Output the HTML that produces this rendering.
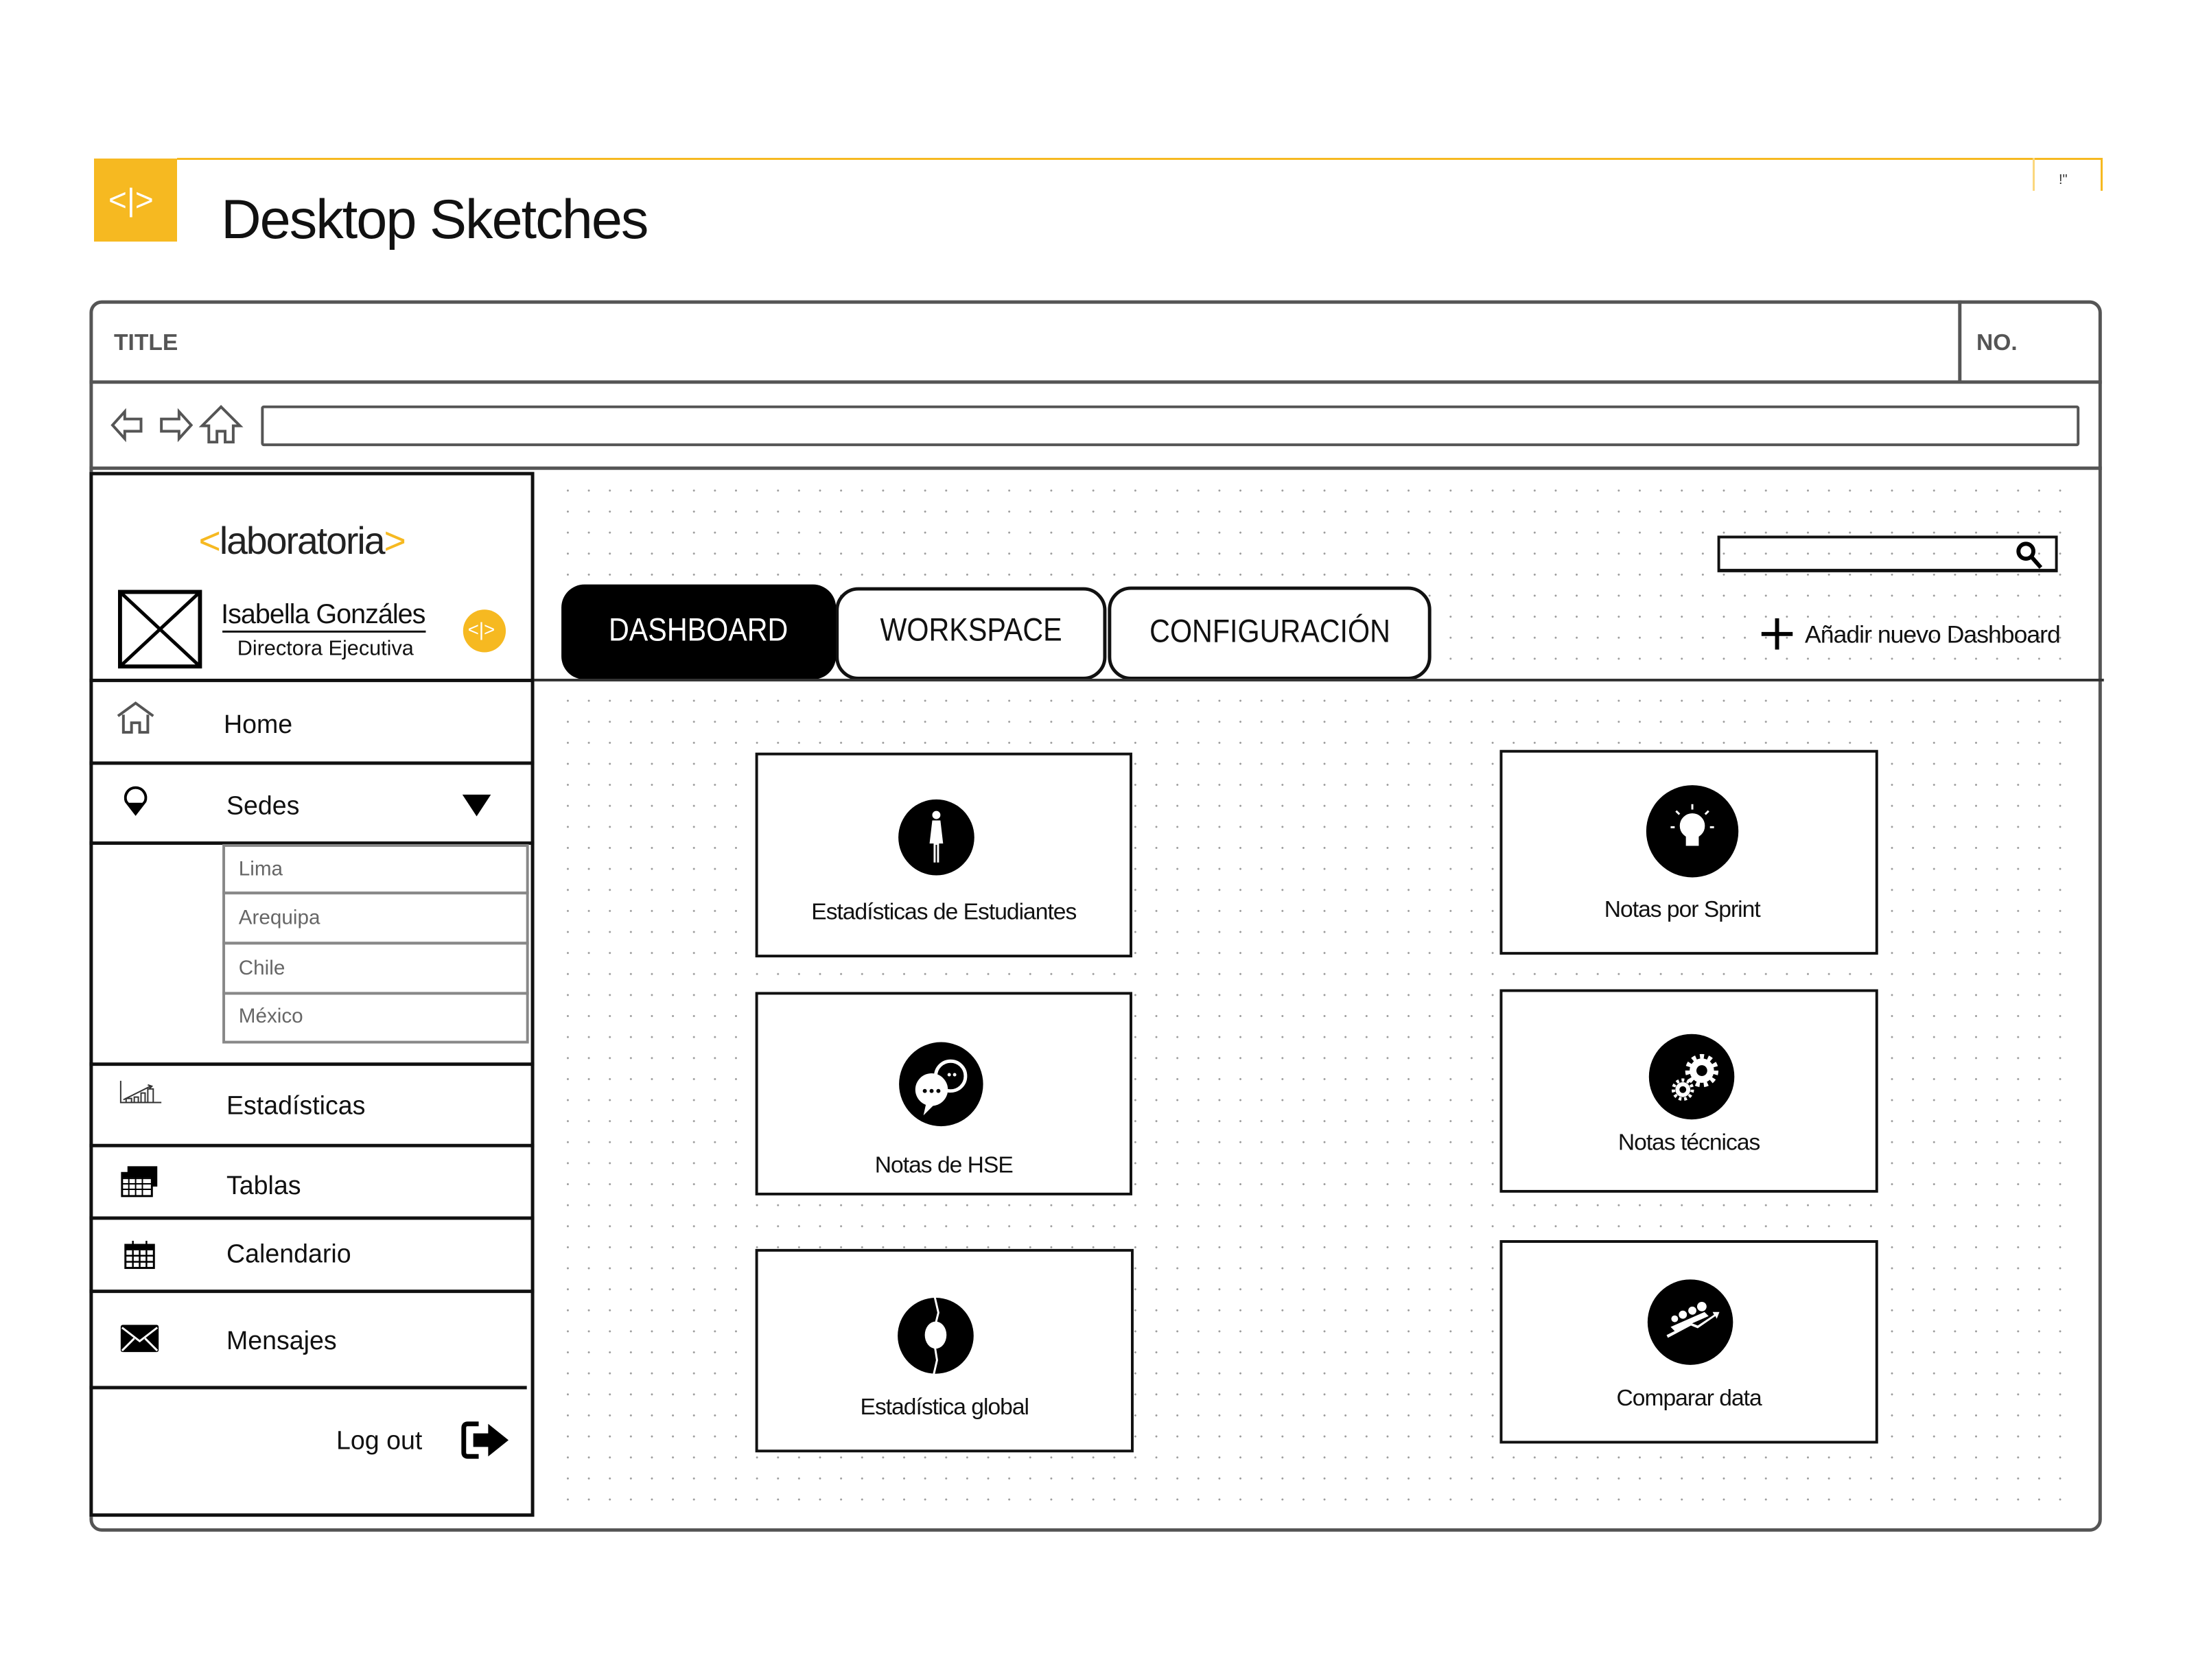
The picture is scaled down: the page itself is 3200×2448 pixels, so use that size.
<!DOCTYPE html>
<html><head><meta charset="utf-8"><style>
*{margin:0;padding:0;box-sizing:border-box}
body{width:3200px;height:2448px;background:#fff;position:relative;overflow:hidden;font-family:"Liberation Sans",sans-serif;color:#111}
#w{position:absolute;left:0;top:0;width:3200px;height:2448px;transform:scale(0.988);transform-origin:0 0}
.a{position:absolute}
.t{position:absolute;white-space:nowrap;line-height:1}
.hl{position:absolute;height:5px;background:#111}
.card{position:absolute;border:4px solid #111;background:#fff}
.ic{position:absolute;border-radius:50%;background:#000}
.lab{position:absolute;left:0;right:0;text-align:center;font-size:34px;letter-spacing:-1px}
.nav{position:absolute;font-size:38px;left:335px}
.sub{position:absolute;left:328px;width:452px;border:4px solid #888;font-size:30px;color:#666;padding-left:20px}
.dots{background-image:radial-gradient(circle,#9a9a9a 1.3px,transparent 1.6px);background-size:31px 31px}
.sx{display:inline-block;transform:scaleX(0.87)}
</style></head><body>
<!-- header (unscaled) -->
<div class="a" style="left:137px;top:231px;width:121px;height:121px;background:#f6b921"></div>
<div class="t" style="left:158px;top:268px;font-size:46px;color:#fff">&lt;|&gt;</div>
<div class="a" style="left:258px;top:230px;width:2805px;height:3px;background:#f6b921"></div>
<div class="a" style="left:2962px;top:230px;width:3px;height:48px;background:#fbd77e"></div>
<div class="a" style="left:3061px;top:230px;width:3px;height:48px;background:#f6b921"></div>
<div class="t" style="left:3000px;top:252px;font-size:20px;color:#333">!"</div>
<div id="w">
<div class="t" style="left:326px;top:283px;font-size:82px;letter-spacing:-2px">Desktop Sketches</div>

<!-- frame -->
<div class="a" style="left:132px;top:443px;width:2968px;height:1816px;border:5px solid #555;border-radius:18px"></div>
<div class="a" style="left:132px;top:561px;width:2968px;height:5px;background:#555"></div>
<div class="a" style="left:2888px;top:443px;width:5px;height:120px;background:#555"></div>
<div class="t" style="left:168px;top:488px;font-size:34px;font-weight:bold;color:#555">TITLE</div>
<div class="t" style="left:2915px;top:488px;font-size:34px;font-weight:bold;color:#555">NO.</div>
<div class="a" style="left:132px;top:688px;width:2968px;height:5px;background:#555"></div>
<div class="a" style="left:385px;top:598px;width:2682px;height:60px;border:4px solid #555;border-radius:4px"></div>
<svg class="a" style="left:160px;top:590px" width="200" height="70" viewBox="0 0 200 70" fill="none" stroke="#555" stroke-width="4">
<path d="M6 37 L24 17 V28 H48 V46 H24 V57 Z"/>
<path d="M122 37 L104 17 V28 H78 V46 H104 V57 Z"/>
<path d="M138 38 L166 10 L194 38 H184 V62 H172 V46 H160 V62 H148 V38 Z"/>
</svg>

<!-- main dotted area -->
<div class="a dots" style="left:822px;top:708px;width:2232px;height:1520px"></div>

<!-- sidebar -->
<div class="a" style="left:132px;top:696px;width:656px;height:1541px;border:5px solid #111;background:#fff"></div>
<div class="t" style="left:293px;top:770px;font-size:56px;letter-spacing:-2px;color:#222"><span style="color:#f6b921">&lt;</span>laboratoria<span style="color:#f6b921">&gt;</span></div>
<svg class="a" style="left:174px;top:870px" width="124" height="116"><rect x="3" y="3" width="118" height="110" fill="#fff" stroke="#000" stroke-width="6"/><path d="M3 3L121 113M121 3L3 113" stroke="#000" stroke-width="5"/></svg>
<div class="t" style="left:326px;top:886px;font-size:40px;letter-spacing:-1px">Isabella Gonzáles</div>
<div class="a" style="left:328px;top:930px;width:300px;height:3px;background:#111"></div>
<div class="t" style="left:350px;top:940px;font-size:31px">Directora Ejecutiva</div>
<div class="a" style="left:683px;top:899px;width:63px;height:63px;border-radius:50%;background:#f6b921"></div>
<div class="t" style="left:690px;top:915px;font-size:28px;color:#fff">&lt;|&gt;</div>

<div class="hl" style="left:132px;top:1001px;width:656px"></div>
<svg class="a" style="left:170px;top:1034px" width="60" height="50" fill="none" stroke="#555" stroke-width="4"><path d="M4 22 L30 3 L56 22 M12 20 V46 H24 V32 H36 V46 H48 V20"/></svg>
<div class="nav t" style="left:330px;top:1050px">Home</div>
<div class="hl" style="left:132px;top:1123px;width:656px"></div>
<svg class="a" style="left:180px;top:1158px" width="40" height="46"><path d="M20 42 L6 24 A15 15 0 1 1 34 24 Z" fill="#fff" stroke="#000" stroke-width="4"/><path d="M8 26 L20 42 L32 26Z" fill="#000"/></svg>
<div class="nav t" style="left:334px;top:1170px">Sedes</div>
<svg class="a" style="left:680px;top:1168px" width="46" height="40"><path d="M2 4 H44 L23 36Z" fill="#000"/></svg>
<div class="hl" style="left:132px;top:1241px;width:656px"></div>
<div class="sub" style="top:1245px;height:74px;line-height:66px">Lima</div>
<div class="sub" style="top:1315px;height:78px;line-height:70px">Arequipa</div>
<div class="sub" style="top:1389px;height:78px;line-height:70px">Chile</div>
<div class="sub" style="top:1463px;height:76px;line-height:64px">México</div>

<div class="hl" style="left:132px;top:1567px;width:656px"></div>
<svg class="a" style="left:172px;top:1592px" width="70" height="38" fill="none" stroke="#333" stroke-width="2"><path d="M6 2 V34 H66 M10 30 L50 10 M46 8 L52 10 L48 14"/><rect x="14" y="28" width="8" height="6"/><rect x="26" y="26" width="6" height="8"/><rect x="36" y="20" width="6" height="14"/><rect x="46" y="14" width="8" height="20"/></svg>
<div class="nav t" style="left:334px;top:1612px">Estadísticas</div>
<div class="hl" style="left:132px;top:1687px;width:656px"></div>
<svg class="a" style="left:178px;top:1718px" width="56" height="48"><rect x="10" y="2" width="44" height="30" fill="#000"/><rect x="2" y="12" width="44" height="34" fill="#fff" stroke="#000" stroke-width="3"/><path d="M2 20H46M2 28H46M2 36H46M12 14V46M22 14V46M32 14V46" stroke="#000" stroke-width="2"/><rect x="2" y="12" width="44" height="7" fill="#000"/></svg>
<div class="nav t" style="left:334px;top:1730px">Tablas</div>
<div class="hl" style="left:132px;top:1794px;width:656px"></div>
<svg class="a" style="left:182px;top:1826px" width="48" height="48"><rect x="3" y="10" width="42" height="34" fill="#fff" stroke="#000" stroke-width="3"/><rect x="3" y="10" width="42" height="8" fill="#000"/><path d="M3 26H45M3 35H45M14 18V44M24 18V44M34 18V44M14 4V12M34 4V12" stroke="#000" stroke-width="2.5"/></svg>
<div class="nav t" style="left:334px;top:1831px">Calendario</div>
<div class="hl" style="left:132px;top:1902px;width:656px"></div>
<svg class="a" style="left:176px;top:1952px" width="60" height="44"><rect x="2" y="2" width="56" height="40" rx="3" fill="#000"/><path d="M4 6 L30 26 L56 6 M4 40 L22 22 M56 40 L38 22" stroke="#fff" stroke-width="3" fill="none"/></svg>
<div class="nav t" style="left:334px;top:1959px">Mensajes</div>
<div class="hl" style="left:132px;top:2044px;width:645px"></div>
<div class="t" style="left:496px;top:2106px;font-size:38px">Log out</div>
<svg class="a" style="left:680px;top:2092px" width="74" height="64"><path d="M26 8 H10 Q4 8 4 14 V50 Q4 56 10 56 H26" fill="none" stroke="#000" stroke-width="7"/><path d="M18 22 H40 V8 L70 32 L40 56 V42 H18Z" fill="#000"/></svg>

<!-- search -->
<div class="a" style="left:2533px;top:790px;width:502px;height:54px;border:4px solid #111;border-bottom-width:5px"></div>
<svg class="a" style="left:2970px;top:795px" width="50" height="46" fill="none" stroke="#000" stroke-width="6"><circle cx="18" cy="18" r="11"/><path d="M26 26 L40 42"/></svg>

<!-- tabs -->
<div class="a" style="left:1634px;top:865px;width:477px;height:138px;border:5px solid #111;border-radius:34px;background:#fff"></div>
<div class="t" style="left:1634px;width:477px;top:908px;text-align:center;font-size:48px"><span class="sx">CONFIGURACIÓN</span></div>
<div class="a" style="left:1232px;top:866px;width:400px;height:137px;border:5px solid #111;border-radius:34px;background:#fff"></div>
<div class="t" style="left:1232px;width:400px;top:906px;text-align:center;font-size:48px"><span class="sx">WORKSPACE</span></div>
<div class="a" style="left:828px;top:862px;width:405px;height:140px;border-radius:34px;background:#000"></div>
<div class="t" style="left:828px;width:405px;top:906px;text-align:center;font-size:48px;color:#fff"><span class="sx">DASHBOARD</span></div>
<div class="a" style="left:788px;top:1001px;width:2315px;height:4px;background:#333"></div>
<svg class="a" style="left:2596px;top:910px" width="50" height="50"><path d="M25 2V48M2 25H48" stroke="#000" stroke-width="6"/></svg>
<div class="t" style="left:2662px;top:918px;font-size:36px;letter-spacing:-1px">Añadir nuevo Dashboard</div>

<!-- cards -->
<div class="card" style="left:1114px;top:1110px;width:556px;height:302px">
 <div class="ic" style="left:207px;top:65px;width:112px;height:112px"></div>
 <svg class="a" style="left:247px;top:78px" width="32" height="86"><circle cx="16" cy="10" r="6" fill="#fff"/><path d="M10 18 H22 L26 52 H20 V80 H17 V54 H15 V80 H12 V52 H6Z" fill="#fff"/></svg>
 <div class="lab" style="top:212px">Estadísticas de Estudiantes</div></div>
<div class="card" style="left:2212px;top:1106px;width:558px;height:302px">
 <div class="ic" style="left:212px;top:48px;width:136px;height:136px"></div>
 <svg class="a" style="left:240px;top:70px" width="80" height="90" fill="none" stroke="#fff" stroke-width="3"><circle cx="40" cy="38" r="17" fill="#fff"/><path d="M32 54 H48 V66 H32Z" fill="#fff"/><path d="M40 6V14M16 16L21 21M64 16L59 21M8 40H14M66 40H72"/></svg>
 <div class="lab" style="top:212px;left:-20px">Notas por Sprint</div></div>
<div class="card" style="left:1114px;top:1463px;width:556px;height:300px">
 <div class="ic" style="left:208px;top:70px;width:124px;height:124px"></div>
 <svg class="a" style="left:222px;top:90px" width="100" height="90"><circle cx="62" cy="30" r="22" fill="none" stroke="#fff" stroke-width="5"/><path d="M48 48 L52 64 L58 50" fill="#fff"/><circle cx="34" cy="50" r="24" fill="#fff"/><path d="M26 70 L22 88 L38 72Z" fill="#fff"/><circle cx="24" cy="52" r="3" fill="#000"/><circle cx="34" cy="52" r="3" fill="#000"/><circle cx="44" cy="52" r="3" fill="#000"/><circle cx="60" cy="28" r="2.5" fill="#fff"/><circle cx="68" cy="28" r="2.5" fill="#fff"/></svg>
 <div class="lab" style="top:232px">Notas de HSE</div></div>
<div class="card" style="left:2212px;top:1459px;width:558px;height:300px">
 <div class="ic" style="left:216px;top:62px;width:126px;height:126px"></div>
 <svg class="a" style="left:236px;top:80px" width="90" height="90"><g fill="#fff"><circle cx="58" cy="36" r="18"/><circle cx="30" cy="64" r="11"/></g><g stroke="#fff" stroke-width="7" stroke-dasharray="6 6"><circle cx="58" cy="36" r="21" fill="none"/></g><g stroke="#fff" stroke-width="5" stroke-dasharray="4 4"><circle cx="30" cy="64" r="14" fill="none"/></g><circle cx="58" cy="36" r="8" fill="#000"/><circle cx="30" cy="64" r="5" fill="#000"/></svg>
 <div class="lab" style="top:203px">Notas técnicas</div></div>
<div class="card" style="left:1114px;top:1842px;width:558px;height:300px">
 <div class="ic" style="left:206px;top:68px;width:112px;height:112px"></div>
 <svg class="a" style="left:206px;top:60px" width="112" height="130"><ellipse cx="56" cy="63" rx="16" ry="20" fill="#fff"/><path d="M54 4 L60 30 L52 62 L58 100 L52 126" stroke="#fff" stroke-width="3" fill="none"/></svg>
 <div class="lab" style="top:210px">Estadística global</div></div>
<div class="card" style="left:2212px;top:1829px;width:558px;height:300px">
 <div class="ic" style="left:214px;top:54px;width:126px;height:126px"></div>
 <svg class="a" style="left:234px;top:80px" width="90" height="80" fill="#fff"><circle cx="60" cy="14" r="7"/><circle cx="46" cy="20" r="6"/><circle cx="32" cy="26" r="6"/><circle cx="20" cy="32" r="5"/><path d="M8 56 L44 38 L54 42 L78 26 L76 22 L86 22 L82 32 L80 28 L54 46 L44 42 L10 60Z"/><path d="M14 44 L64 22 L70 28 L20 50Z"/></svg>
 <div class="lab" style="top:210px">Comparar data</div></div>
</div></body></html>
